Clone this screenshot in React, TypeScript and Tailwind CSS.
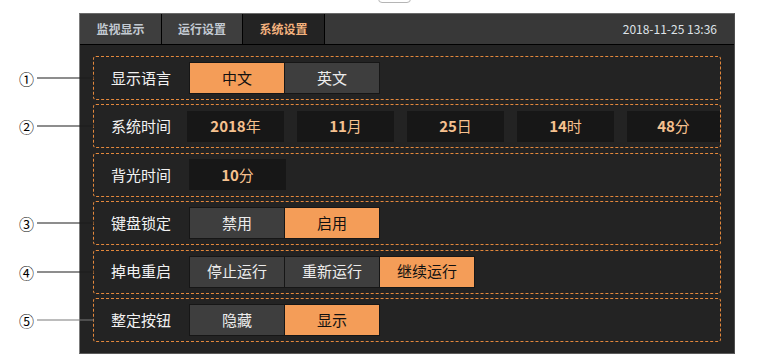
const FONT = "font-['Noto_Sans_CJK_SC','Noto_Sans',sans-serif]";

type Opt = { label: string; on?: boolean };

const rows: {
  mark?: string;
  markLine?: string;
  label: string;
  kind: 'opts' | 'time';
  opts?: Opt[];
  times?: [string, string][];
}[] = [
  { mark: '①', label: '显示语言', kind: 'opts', opts: [{ label: '中文', on: true }, { label: '英文' }] },
  {
    mark: '②',
    label: '系统时间',
    kind: 'time',
    times: [
      ['2018', '年'],
      ['11', '月'],
      ['25', '日'],
      ['14', '时'],
      ['48', '分'],
    ],
  },
  { label: '背光时间', kind: 'time', times: [['10', '分']] },
  { mark: '③', label: '键盘锁定', kind: 'opts', opts: [{ label: '禁用' }, { label: '启用', on: true }] },
  {
    mark: '④',
    label: '掉电重启',
    kind: 'opts',
    opts: [{ label: '停止运行' }, { label: '重新运行' }, { label: '继续运行', on: true }],
  },
  {
    mark: '⑤',
    markLine: 'bg-[#7a7a7a]',
    label: '整定按钮',
    kind: 'opts',
    opts: [{ label: '隐藏' }, { label: '显示', on: true }],
  },
];

const tabs = [
  { label: '监视显示', w: 'w-[82px]' },
  { label: '运行设置', w: 'w-[81px]' },
  { label: '系统设置', w: 'w-[82px]', active: true },
];

export default function App() {
  return (
    <div className={`relative h-[364px] w-[769px] overflow-hidden bg-white ${FONT}`}>
      {/* cut-off control at the top edge */}
      <div className="absolute left-[378px] top-[-7px] h-[10px] w-[33px] rounded border border-[#b5b5b5] bg-white" />

      <div className="ml-[79px] pt-[13px]">
        <div className="flex h-[341px] w-[656px] flex-col border-l border-t border-r border-b border-l-[#7c7c7c] border-t-[#6a6a6a] border-r-[#4e4e4e] border-b-[#5a5a5a] bg-[#232323]">
          {/* tab bar */}
          <div className="flex h-[31px] shrink-0 items-stretch border-b border-black bg-[#383838]">
            {tabs.map((t) => (
              <div
                key={t.label}
                className={`${t.w} flex items-center justify-center border-r border-black text-[12px] font-bold ${
                  t.active ? 'bg-[#232323] text-[#f4b27e]' : 'bg-[#3e3e3e] text-[#c3cad2]'
                }`}
              >
                {t.label}
              </div>
            ))}
            <div className="ml-auto flex items-center pr-[17px] text-[12px] text-[#dfe3e8]">
              2018-11-25 13:36
            </div>
          </div>

          {/* settings rows */}
          <div className="flex flex-col gap-[4.4px] pl-[13px] pr-[13px] pt-[11px]">
            {rows.map((r) => (
              <div
                key={r.label}
                className="relative flex h-[44px] items-center rounded-[3px] border border-dashed border-[#e4883c] pl-[17px]"
              >
                {r.mark && (
                  <div className="absolute right-full top-1/2 flex w-[75px] -translate-y-1/2 items-center">
                    <span className="w-[15px] text-center text-[15px] leading-none text-black">{r.mark}</span>
                    <span className={`ml-[3px] h-px flex-1 ${r.markLine ?? 'bg-[#1c1c1c]'}`} />
                  </div>
                )}
                <div className="w-[78px] text-[15px] text-[#f2f2f2]">{r.label}</div>
                {r.kind === 'opts' ? (
                  <div className="flex">
                    {r.opts!.map((o, i) => (
                      <div
                        key={o.label}
                        className={`flex h-[32px] w-[96px] items-center justify-center border border-[#161616] text-[15px] ${
                          i > 0 ? '-ml-px' : ''
                        } ${o.on ? 'bg-[#f49d58] text-[#111]' : 'bg-[#3e3e3e] text-[#ececec]'}`}
                      >
                        {o.label}
                      </div>
                    ))}
                  </div>
                ) : (
                  <div className="flex gap-[13px]">
                    {r.times!.map(([n, u], i) => (
                      <div
                        key={u}
                        className={`flex h-[31px] ${
                          i === 4 ? 'w-[93px]' : 'w-[97px]'
                        } items-center justify-center bg-[#171717] text-[15px] text-[#f6c18f]`}
                      >
                        <span className="font-bold">{n}</span>
                        <span>{u}</span>
                      </div>
                    ))}
                  </div>
                )}
              </div>
            ))}
          </div>
        </div>
      </div>
    </div>
  );
}
